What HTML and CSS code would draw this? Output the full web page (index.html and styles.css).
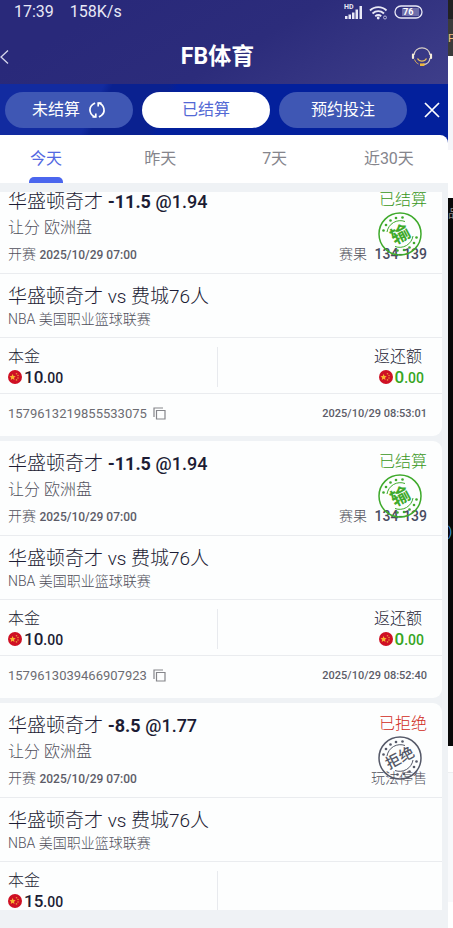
FILE: index.html
```html
<!DOCTYPE html>
<html lang="zh-CN">
<head>
<meta charset="utf-8">
<meta name="viewport" content="width=device-width, initial-scale=1">
<title>FB体育</title>
<link rel="stylesheet" href="styles.css">
</head>
<body>
<svg class="defs" aria-hidden="true">
  <symbol id="flag" viewBox="0 0 14 14">
    <circle cx="7" cy="7" r="7" fill="#cf1024"/>
    <path d="M4.6 4l.9 2.100 2.200.2-1.700 1.400.5 2.200-1.900-1.200-1.900 1.200.5-2.200L1.500 6.300l2.200-.2z" fill="#f7b731"/>
    <g fill="#e9923a"><circle cx="8.500" cy="3.700" r=".8"/><circle cx="10" cy="5.500" r=".8"/><circle cx="10" cy="8" r=".8"/><circle cx="8.500" cy="9.900" r=".8"/></g>
  </symbol>
  <symbol id="copy" viewBox="0 0 13 13">
    <path d="M3.500 3.500h8.500v8.500H3.500zM1 10V1h9" fill="none" stroke="#85858a" stroke-width="1.200"/>
  </symbol>
  <symbol id="seal" viewBox="0 0 44 44">
    <g fill="none" stroke="currentColor">
      <circle cx="22" cy="22" r="21" stroke-width="1.500"/>
      <path d="M9 20a13.500 13.500 0 0 1 18-10.500M35 24a13.500 13.500 0 0 1-18 10.500" stroke-width="1"/>
    </g>
    <g fill="currentColor">
      <circle cx="5.500" cy="18.500" r="1.300"/><circle cx="8" cy="13" r="1.300"/><circle cx="12.500" cy="8.500" r="1.300"/><circle cx="18" cy="6" r="1.300"/><circle cx="24.500" cy="5.500" r="1.300"/>
      <circle cx="38.500" cy="25.500" r="1.300"/><circle cx="36" cy="31" r="1.300"/><circle cx="31.500" cy="35.500" r="1.300"/><circle cx="26" cy="38" r="1.300"/><circle cx="19.500" cy="38.500" r="1.300"/>
    </g>
  </symbol>
</svg>

<div class="screen">
  <div class="app">
    <header class="top">
      <div class="statusbar">
        <span>17:39</span><span>158K/s</span>
        <svg class="system" width="80" height="18" viewBox="0 0 80 18" aria-hidden="true">
          <text x="0" y="6" class="hd">HD</text>
          <g fill="#e8e8f6"><path d="M1 13h2.500v3H1zM4.500 11.500H7V16H4.500zM8 9.500h2.500V16H8zM11.500 6.500H14V16h-2.500zM15.500 3H18v13h-2.500z"/></g>
          <g fill="none" stroke="#e8e8f6" stroke-width="1.900"><path d="M26 7.500c4.500-4.500 12-4.500 16.500 0M28.500 10.500c3.500-3 8-3 11.500 0M31.200 13.200c2-1.500 4.200-1.500 6 0"/></g>
          <circle cx="34.200" cy="15" r="1.400" fill="#e8e8f6"/>
          <circle cx="41" cy="14.500" r="1.500" fill="none" stroke="#b8b8dc"/>
          <rect x="51" y="3" width="27" height="12" rx="6" fill="none" stroke="#e8e8f6" stroke-width="1.300"/>
          <rect x="58" y="5" width="17" height="8" fill="#6e6eaa"/>
          <text x="59" y="12" class="battery">76</text>
        </svg>
      </div>
      <div class="titlebar">
        <button class="plain" aria-label="返回"><svg width="12" height="16" viewBox="0 0 12 16"><path d="M8 1.500L1 8l7 6.500" fill="none" stroke="#d6d6ec" stroke-width="1.300"/></svg></button>
        <h1>FB体育</h1>
        <button class="plain" aria-label="客服"><svg width="22" height="20" viewBox="0 0 22 20" fill="none"><path d="M3 8C4-1.500 18-1.500 19 8" stroke="#d8cfc7" stroke-width="1.300"/><path d="M19 11c-.5 4-3 6.500-7 6.500" stroke="#d8cfc7" stroke-width="1.300"/><path d="M2 7.500v3.500M20 7.500v3.500" stroke="#f5edda" stroke-width="2.200" stroke-linecap="round"/><path d="M3.500 12.500c1 2.500 2 3.500 4 4.500" stroke="#d9ac55"/><path d="M6.500 11.500c2 3.500 7 3.500 9 0" stroke="#e8bd5d" stroke-width="1.300"/><path d="M9 17.700h4.500" stroke="#ecb63f" stroke-width="2.600"/></svg></button>
      </div>
    </header>

    <nav class="modes">
      <button class="pill">未结算 <svg width="18" height="18" viewBox="0 0 18 18" fill="none" stroke="#fff" stroke-width="1.700"><path d="M7.500 15.800A7 7 0 0 1 4.500 3.600L7 2M10.500 2.200A7 7 0 0 1 13.500 14.400L11 16"/><path d="M7.800 12.500v3.400H4.500M10.200 5.500V2.100h3.300"/></svg></button>
      <button class="pill active">已结算</button>
      <button class="pill">预约投注</button>
      <button class="close" aria-label="关闭"><svg width="16" height="16" viewBox="0 0 16 16"><path d="M1 1l14 14M15 1L1 15" stroke="#fff" stroke-width="1.700"/></svg></button>
    </nav>

    <div class="sheet">
      <div class="tabs">
        <button class="tab current">今天</button>
        <button class="tab">昨天</button>
        <button class="tab">7天</button>
        <button class="tab">近30天</button>
      </div>
    </div>

    <main class="viewport">
      <div class="list">
        <article class="card">
          <section class="bet">
            <div class="row pick"><h2>华盛顿奇才 <b>-11.5</b> <strong>@1.94</strong></h2><span class="state">已结算</span></div>
            <p class="market">让分 欧洲盘</p>
            <div class="row start"><span>开赛 <time>2025/10/29 07:00</time></span><span>赛果 <b class="score">134-139</b></span></div>
            <svg class="stamp" viewBox="0 0 44 44"><use href="#seal"/><text x="22" y="29" class="lose" transform="rotate(-28 22 22)">输</text></svg>
          </section>
          <section class="match"><h3>华盛顿奇才 vs 费城76人</h3><p>NBA 美国职业篮球联赛</p></section>
          <section class="money">
            <div><p>本金</p><p class="sum"><svg><use href="#flag"/></svg><span>10<small>.00</small></span></p></div>
            <div class="back"><p>返还额</p><p class="sum"><svg><use href="#flag"/></svg><span>0<small>.00</small></span></p></div>
          </section>
          <footer class="row"><span class="order">1579613219855533075 <button class="plain" aria-label="复制"><svg width="13" height="13"><use href="#copy"/></svg></button></span><time>2025/10/29 08:53:01</time></footer>
        </article>

        <article class="card">
          <section class="bet">
            <div class="row pick"><h2>华盛顿奇才 <b>-11.5</b> <strong>@1.94</strong></h2><span class="state">已结算</span></div>
            <p class="market">让分 欧洲盘</p>
            <div class="row start"><span>开赛 <time>2025/10/29 07:00</time></span><span>赛果 <b class="score">134-139</b></span></div>
            <svg class="stamp" viewBox="0 0 44 44"><use href="#seal"/><text x="22" y="29" class="lose" transform="rotate(-28 22 22)">输</text></svg>
          </section>
          <section class="match"><h3>华盛顿奇才 vs 费城76人</h3><p>NBA 美国职业篮球联赛</p></section>
          <section class="money">
            <div><p>本金</p><p class="sum"><svg><use href="#flag"/></svg><span>10<small>.00</small></span></p></div>
            <div class="back"><p>返还额</p><p class="sum"><svg><use href="#flag"/></svg><span>0<small>.00</small></span></p></div>
          </section>
          <footer class="row"><span class="order">1579613039466907923 <button class="plain" aria-label="复制"><svg width="13" height="13"><use href="#copy"/></svg></button></span><time>2025/10/29 08:52:40</time></footer>
        </article>

        <article class="card rejected">
          <section class="bet">
            <div class="row pick"><h2>华盛顿奇才 <b>-8.5</b> <strong>@1.77</strong></h2><span class="state">已拒绝</span></div>
            <p class="market">让分 欧洲盘</p>
            <div class="row start"><span>开赛 <time>2025/10/29 07:00</time></span><span>玩法停售</span></div>
            <svg class="stamp" viewBox="0 0 44 44"><use href="#seal"/><text x="22" y="27" class="refused" transform="rotate(-28 22 22)">拒绝</text></svg>
          </section>
          <section class="match"><h3>华盛顿奇才 vs 费城76人</h3><p>NBA 美国职业篮球联赛</p></section>
          <section class="money">
            <div><p>本金</p><p class="sum"><svg><use href="#flag"/></svg><span>15<small>.00</small></span></p></div>
            <div></div>
          </section>
        </article>
      </div>
    </main>
  </div>

  <aside class="edge" aria-hidden="true">
    <div class="e-dark"></div>
    <div class="e-bar">P</div>
    <div class="e-white"></div>
    <div class="e-tint"></div>
    <div class="e-gap"></div>
    <div class="e-black"><span>品</span><i>)</i></div>
    <div class="e-line"></div>
    <div class="e-pale"></div>
    <div class="e-end"></div>
  </aside>
</div>
</body>
</html>
```
FILE: styles.css
```css
* { box-sizing: border-box; }
body, h1, h2, h3, p { margin: 0; }
body { font-family: Roboto, "Noto Sans CJK SC", sans-serif; color: #1c1c34; background: #fff; }
button { font: inherit; color: inherit; border: 0; padding: 0; background: none; }
svg { display: block; flex: none; }
.defs { position: absolute; width: 0; height: 0; }
.plain { display: flex; align-items: center; }

.screen { display: flex; height: 100vh; overflow: hidden; }
.app { flex: 1; min-width: 0; display: flex; flex-direction: column; background: #eff2f5; padding-bottom: 18px; }

.top { background: linear-gradient(150deg, #29297a 20%, #2c2c7b 55%, #3e3e8a); color: #e8e8f6; }
.statusbar { display: flex; align-items: center; gap: 16px; height: 23px; padding: 0 24px 0 14px; font-size: 16px; }
.system { margin-left: auto; }
.hd { font-size: 7px; font-weight: 700; fill: #e8e8f6; }
.battery { font-size: 9px; font-weight: 700; fill: #fff; }
.titlebar { display: grid; grid-template-columns: 1fr auto 1fr; align-items: center; height: 61px; padding: 6px 15px 0 0; }
.titlebar h1 { font-size: 23px; line-height: 30px; font-weight: 700; color: #fff; padding-left: 2px; }
.titlebar .plain:last-child { justify-self: end; }

.modes { display: flex; align-items: center; gap: 9px; padding: 8px 0 7px 5px; background: linear-gradient(115deg, #122ba0 22%, #0a2190 24% 36%, #03209c 38%); }
.pill { flex: 1; height: 36px; border-radius: 18px; background: #3f57b4; color: #fff; font-size: 16px; line-height: 36px; display: flex; align-items: center; justify-content: center; gap: 8px; }
.pill.active { background: #fff; color: #5369d5; }
.close { width: 32px; height: 36px; display: flex; align-items: center; justify-content: center; }

.sheet { background: #03209c; }
.tabs { display: grid; grid-template-columns: repeat(4, 1fr); height: 48px; margin-left: -11px; padding-right: 2px; background: #fff; border-radius: 0 8px 0 0; }
.tab { display: flex; flex-direction: column; align-items: center; font-size: 16px; line-height: 48px; color: #85858c; position: relative; }
.current { color: #5369e2; }
.current::after { content: ""; position: absolute; bottom: 0; width: 34px; height: 6px; border-radius: 5px 5px 0 0; background: #4b66ee; }

.viewport { flex: 1; min-height: 0; margin-top: 9px; overflow: hidden; }
.list { display: grid; gap: 5px; margin: -13px 6px 0 0; }
.card { background: #fdfefe; border-radius: 0 9px 9px 0; }
.card > * { padding: 0 15px 0 8px; }
.card section { border-bottom: 1px solid #eaecef; }
.row { display: flex; justify-content: space-between; align-items: center; }

.card .bet { position: relative; height: 95px; padding-top: 10px; }
.pick { height: 26px; }
.pick h2, .match h3 { font-size: 19px; font-weight: 300; line-height: 24px; }
.pick b, .pick strong { font-size: 18px; }
.pick b { font-weight: 700; }
.pick strong { font-weight: 500; }
.state { font-size: 16px; line-height: 24px; font-weight: 300; color: #38961a; padding-bottom: 5px; }
.market { font-size: 16px; line-height: 26px; font-weight: 300; color: #50505c; }
.start { height: 26px; font-size: 14px; line-height: 26px; font-weight: 300; color: #50505c; }
time { font-size: 12px; font-weight: 500; color: #5c5c68; }
.score { font-size: 14px; font-weight: 500; color: #484b60; margin-left: 4px; }
.stamp { position: absolute; top: 33px; right: 20px; width: 44px; height: 44px; color: #3faa2c; }
.stamp text { fill: currentColor; text-anchor: middle; }
.lose { font-size: 19px; font-weight: 700; }
.refused { font-size: 15px; font-weight: 500; }

.card .match { height: 64px; padding-top: 11px; }
.match p { font-size: 14px; line-height: 20px; font-weight: 300; color: #50505c; }

.card .money { display: flex; height: 56px; padding-top: 9px; padding-bottom: 6px; }
.money > div { flex: 1; }
.money > div:first-child { border-right: 1px solid #e8eaee; }
.money p { height: 20px; font-size: 16px; line-height: 20px; font-weight: 300; }
.money .back { text-align: right; }
.back p { padding-right: 5px; }
.money .sum { display: flex; align-items: center; gap: 2px; font-size: 17px; font-weight: 500; }
.sum svg { width: 14px; height: 14px; }
.sum small { font-size: 14px; }
.back .sum { justify-content: flex-end; padding-right: 3px; color: #36a51e; }

.card footer { height: 42px; padding-bottom: 4px; }
.order { display: flex; align-items: center; gap: 6px; font-size: 13px; color: #6c6c72; }
footer time { font-size: 11px; }

.rejected .state { color: #d02a20; }
.rejected .stamp { color: #555968; }

.edge { flex: 0 0 5px; overflow: hidden; display: flex; flex-direction: column; background: #fff; }
.e-dark { flex: 19; background: #222; }
.e-bar { flex: 37; min-height: 0; background: #3b3b3b; color: #f0c080; font-size: 11px; line-height: 40px; overflow: hidden; }
.e-white { flex: 54; }
.e-tint { flex: 40; background: #f5f5f9; }
.e-gap { flex: 48; }
.e-black { flex: 549; min-height: 0; background: #080808; color: #888; font-size: 12px; line-height: 32px; overflow: hidden; }
.e-black span, .e-black i { display: block; }
.e-black i { color: #3b9bd8; font-style: normal; margin-top: 286px; }
.e-line { flex: 26; border-bottom: 1px solid #eceef0; }
.e-pale { flex: 129; background: #f8f9fb; }
.e-end { flex: 26; }
```
